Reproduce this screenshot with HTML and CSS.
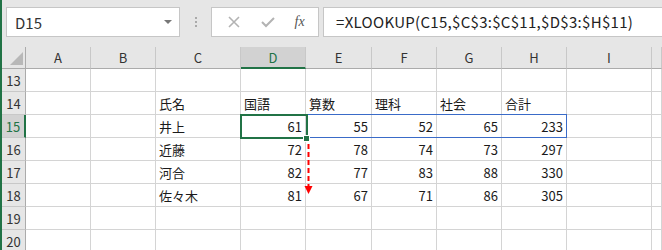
FILE: index.html
```html
<!DOCTYPE html>
<html lang="ja">
<head>
  <meta charset="UTF-8" />
  <title>XLOOKUP - Sheet</title>
  <link rel="stylesheet" href="styles.css">
</head>
<body>

  <div class="toolbar">
    <div class="namebox">
      <span>D15</span>
      <span class="caret"></span>
    </div>
    <div class="grip"><i></i><i></i><i></i></div>
    <div class="fbtns">
      <svg width="14" height="14" viewBox="0 0 14 14"><path d="M2 2 L12 12 M12 2 L2 12" stroke="#b3b3b3" stroke-width="1.6" fill="none"/></svg>
      <svg width="16" height="14" viewBox="0 0 16 14"><path d="M2 7 L6 11 L14 3" stroke="#b3b3b3" stroke-width="2" fill="none"/></svg>
      <span class="fx">fx</span>
    </div>
    <div class="formula">=XLOOKUP(C15,$C$3:$C$11,$D$3:$H$11)</div>
  </div>

  <div class="sheet" id="sheet"></div>

  <script>
    const cols = ["A", "B", "C", "D", "E", "F", "G", "H", "I", ""];
    const rows = [
      [13, []],
      [14, ["", "", "氏名", "国語", "算数", "理科", "社会", "合計"]],
      [15, ["", "", "井上", 61, 55, 52, 65, 233]],
      [16, ["", "", "近藤", 72, 78, 74, 73, 297]],
      [17, ["", "", "河合", 82, 77, 83, 88, 330]],
      [18, ["", "", "佐々木", 81, 67, 71, 86, 305]],
      [19, []],
      [20, []]
    ];
    const sheet = document.getElementById("sheet");

    function cell(parent, cls, text) {
      const el = document.createElement("div");
      el.className = cls;
      el.textContent = text;
      parent.appendChild(el);
      return el;
    }

    cell(sheet, "hd corner", "");
    cols.forEach(c => cell(sheet, c === "D" ? "hd sel-col" : "hd", c));

    rows.forEach(([num, values]) => {
      cell(sheet, num === 15 ? "rh sel-row" : "rh", num);
      cols.forEach((c, i) => {
        const v = values[i] === undefined ? "" : values[i];
        const el = cell(sheet, typeof v === "number" ? "cell num" : "cell", v);
        if (num === 15 && c === "D") {
          el.classList.add("current");
          cell(el, "range", "");
          const active = cell(el, "active", "");
          cell(active, "handle", "");
          el.insertAdjacentHTML("beforeend", `
            <svg class="arrow" width="14" height="56" viewBox="0 0 14 56">
              <line x1="6.5" y1="2" x2="6.5" y2="45" stroke="#ff0000" stroke-width="2" stroke-dasharray="5 3"/>
              <polygon points="2.5,44 10.5,44 6.5,52" fill="#ff0000"/>
            </svg>`);
        }
      });
    });
  </script>
</body>
</html>
```

FILE: styles.css
```css
* {
  box-sizing: border-box;
  margin: 0;
  padding: 0;
}

body {
  height: 250px;
  overflow: hidden;
  background: #ffffff;
  border-left: 2px solid #217346;
  font-family: "Noto Sans CJK JP", "Noto Sans", sans-serif;
  color: #222;
}

.toolbar {
  height: 47px;
  background: #e6e6e6;
  display: flex;
  align-items: flex-start;
  padding: 7px 0 0 4px;
}

.namebox {
  width: 174px;
  height: 30px;
  background: #fff;
  border: 1px solid #c6c6c6;
  display: flex;
  align-items: center;
  justify-content: space-between;
  padding: 0 7px 0 8px;
  font-size: 15px;
  color: #333;
}

.caret {
  width: 0;
  height: 0;
  border-left: 4px solid transparent;
  border-right: 4px solid transparent;
  border-top: 4px solid #777;
}

.grip {
  width: 31px;
  height: 30px;
  display: flex;
  flex-direction: column;
  align-items: center;
  justify-content: center;
  gap: 2px;
}

.grip i {
  width: 2px;
  height: 2px;
  background: #aaa;
}

.fbtns {
  width: 108px;
  height: 30px;
  background: #fff;
  border: 1px solid #c6c6c6;
  display: flex;
  align-items: center;
  justify-content: space-around;
  padding: 0 4px 0 6px;
}

.fx {
  font-family: "Liberation Serif", serif;
  font-style: italic;
  font-size: 14px;
  color: #555;
}

.formula {
  flex: 1;
  height: 30px;
  margin: 0 -4px 0 4px;
  background: #fff;
  border: 1px solid #c6c6c6;
  padding: 0 0 0 12px;
  font-size: 15px;
  letter-spacing: 0.3px;
  line-height: 28px;
  color: #222;
  white-space: nowrap;
}

.sheet {
  display: grid;
  grid-template-columns: 24px 65px 65px 85px 65px 66px 65px 65px 65px 85px 1fr;
  grid-template-rows: 22px repeat(8, 23px);
  font-size: 13px;
}

.hd, .rh, .cell {
  white-space: nowrap;
  overflow: hidden;
}

.hd {
  background: #e6e6e6;
  border-right: 1px solid #c8c8c8;
  border-bottom: 1px solid #ababab;
  text-align: center;
  line-height: 22px;
  color: #333;
}

.corner {
  position: relative;
  border-right-color: #ababab;
}

.corner::after {
  content: "";
  position: absolute;
  right: 2px;
  bottom: 3px;
  border-left: 13px solid transparent;
  border-bottom: 13px solid #b8b8b8;
}

.rh {
  background: #e6e6e6;
  border-right: 1px solid #ababab;
  border-bottom: 1px solid #c8c8c8;
  text-align: center;
  line-height: 23px;
  color: #333;
}

.sel-col {
  background: #d2d2d2;
  color: #217346;
  border-bottom: 2px solid #217346;
}

.sel-row {
  background: #d2d2d2;
  color: #217346;
  border-right: 2px solid #217346;
}

.cell {
  border-right: 1px solid #d4d4d4;
  border-bottom: 1px solid #d4d4d4;
  padding: 0 3px;
  line-height: 23px;
  color: #1a1a1a;
}

.num {
  text-align: right;
}

.cell.current {
  position: relative;
  overflow: visible;
}

.range {
  position: absolute;
  left: -1px;
  top: -1px;
  width: 327px;
  height: 24px;
  border: 1px solid #3a6bc8;
}

.active {
  position: absolute;
  left: -1px;
  top: -1px;
  width: 68px;
  height: 25px;
  border: 2px solid #217346;
}

.handle {
  position: absolute;
  right: -4px;
  bottom: -5px;
  width: 7px;
  height: 7px;
  background: #217346;
  border: 1px solid #fff;
}

.arrow {
  position: absolute;
  left: 61px;
  top: 27px;
}
```
